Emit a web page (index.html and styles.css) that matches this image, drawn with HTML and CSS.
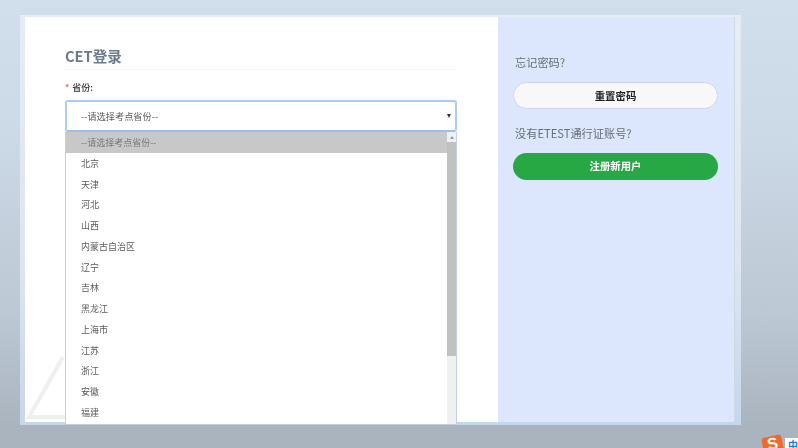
FILE: index.html
```html
<!DOCTYPE html>
<html lang="zh">
<head>
<meta charset="utf-8">
<title>CET登录</title>
<link rel="stylesheet" href="styles.css">
</head>
<body>
<main class="stage">
  <div class="frame">
    <section class="login">
      <svg class="watermark" width="60" height="80" viewBox="0 0 60 80" aria-hidden="true">
        <path d="M38 15 L4 75 L42 75" fill="none" stroke="#efefef" stroke-width="4"/>
      </svg>
      <h1 class="title">CET登录</h1>
      <div class="label"><span class="star">*</span>省份:</div>
      <div class="select-wrap">
        <div class="select">
          <span>--请选择考点省份--</span>
          <span class="caret"></span>
        </div>
        <div class="dropdown">
          <ul class="options">
            <li class="option selected">--请选择考点省份--</li>
            <li class="option">北京</li>
            <li class="option">天津</li>
            <li class="option">河北</li>
            <li class="option">山西</li>
            <li class="option">内蒙古自治区</li>
            <li class="option">辽宁</li>
            <li class="option">吉林</li>
            <li class="option">黑龙江</li>
            <li class="option">上海市</li>
            <li class="option">江苏</li>
            <li class="option">浙江</li>
            <li class="option">安徽</li>
            <li class="option">福建</li>
          </ul>
          <div class="scrollbar">
            <span class="arrow"></span>
            <span class="thumb"></span>
          </div>
        </div>
      </div>
    </section>
    <aside class="side">
      <p class="hint">忘记密码?</p>
      <a class="btn btn-light">重置密码</a>
      <p class="hint">没有ETEST通行证账号?</p>
      <a class="btn btn-green">注册新用户</a>
    </aside>
  </div>
</main>
<div class="ime">
  <span class="ime-logo"><span class="ime-s">S</span></span>
  <span class="ime-box">中</span>
</div>
</body>
</html>
```
FILE: styles.css
```css
* { box-sizing: border-box; }
html, body { margin: 0; height: 100%; }
body {
  width: 798px;
  height: 448px;
  overflow: hidden;
  position: relative;
  background: linear-gradient(180deg, #d1deeb 0%, #ccd9e6 30%, #bcc8d4 70%, #a9b4bf 95%);
  font-family: "Noto Sans CJK SC", "Noto Sans", sans-serif;
}
.stage { padding: 15px 0 0 20px; filter: blur(0.35px); }
.frame {
  width: 721px;
  height: 410px;
  display: flex;
  padding: 2px 7px 3px 5px;
  background: linear-gradient(180deg, #e6ecf5 0%, #dde5f2 60%, #c6d6ec 100%);
}
.login {
  width: 473px;
  background: #fff;
  padding: 28px 41px 0 40px;
  position: relative;
}
.watermark { position: absolute; left: 0; bottom: 0; }
.title {
  margin: 0;
  height: 25px;
  font-size: 14.6px;
  line-height: 22px;
  font-weight: 700;
  color: #6c7a94;
  border-bottom: 1px solid #f3f3f3;
}
.label {
  margin-top: 12px;
  height: 14px;
  font-size: 9px;
  line-height: 12px;
  font-weight: 500;
  color: #333;
}
.star { color: #f55; margin-right: 3px; }
.select-wrap { position: relative; margin-top: 4px; }
.select {
  height: 32px;
  border: 2px solid #a9cdf8;
  border-bottom-color: #9dbdec;
  border-radius: 3px;
  background: #fff;
  display: flex;
  align-items: center;
  justify-content: space-between;
  padding: 0 4px 0 14px;
  font-size: 9.2px;
  color: #5c5c5c;
}
.caret {
  width: 0;
  height: 0;
  border-left: 2px solid transparent;
  border-right: 2px solid transparent;
  border-top: 4px solid #333;
}
.dropdown {
  position: absolute;
  top: 32px;
  left: 0;
  width: 392px;
  height: 293px;
  display: flex;
  background: #fff;
  border: 1px solid #bcd0ea;
  border-top: 0;
  border-bottom-color: #c8ccd2;
  overflow: hidden;
}
.options { list-style: none; margin: 0; padding: 0; flex: 1; }
.option {
  height: 20.75px;
  line-height: 21.6px;
  padding-left: 15px;
  font-size: 9px;
  color: #5c5c5c;
}
.selected { background: #c8c8c8; color: #787878; }
.scrollbar {
  width: 9px;
  background: #f0f0f0;
  display: flex;
  flex-direction: column;
  align-items: center;
}
.arrow {
  margin: 4px 0 3px;
  width: 0;
  height: 0;
  border-left: 2.5px solid transparent;
  border-right: 2.5px solid transparent;
  border-bottom: 3px solid #9a9a9a;
}
.thumb { width: 100%; height: 214px; background: #c1c1c1; }
.side {
  width: 236px;
  background: #dce6fc;
  padding: 37px 16px 0 15px;
  display: flex;
  flex-direction: column;
  box-shadow: 1px 0 #d2d8e0;
}
.hint {
  margin: 0 0 11px 2px;
  font-size: 11.2px;
  line-height: 17px;
  color: #686f79;
}
.btn {
  display: block;
  height: 27px;
  line-height: 26px;
  border-radius: 14px;
  text-align: center;
  font-size: 10.4px;
  font-weight: 700;
}
.btn-light {
  background: #f8f8f9;
  border: 1px solid #cbd8f2;
  color: #222;
  margin-bottom: 16px;
}
.btn-green { background: #28a745; color: #fff; }
.ime {
  position: absolute;
  left: 763px;
  top: 436px;
  display: flex;
}
.ime-logo {
  width: 20px;
  height: 20px;
  background: #f4672a;
  border-radius: 3px;
  transform: rotate(-12deg);
  display: flex;
  justify-content: center;
  color: #fff;
}
.ime-s { font: 700 16px/15px "Liberation Sans", sans-serif; }
.ime-box {
  width: 20px;
  height: 14px;
  margin-left: 2px;
  margin-top: 2px;
  padding-left: 3px;
  background: #fff;
  color: #1b7fdc;
  font-size: 10px;
  line-height: 13px;
  font-weight: 700;
}
```
